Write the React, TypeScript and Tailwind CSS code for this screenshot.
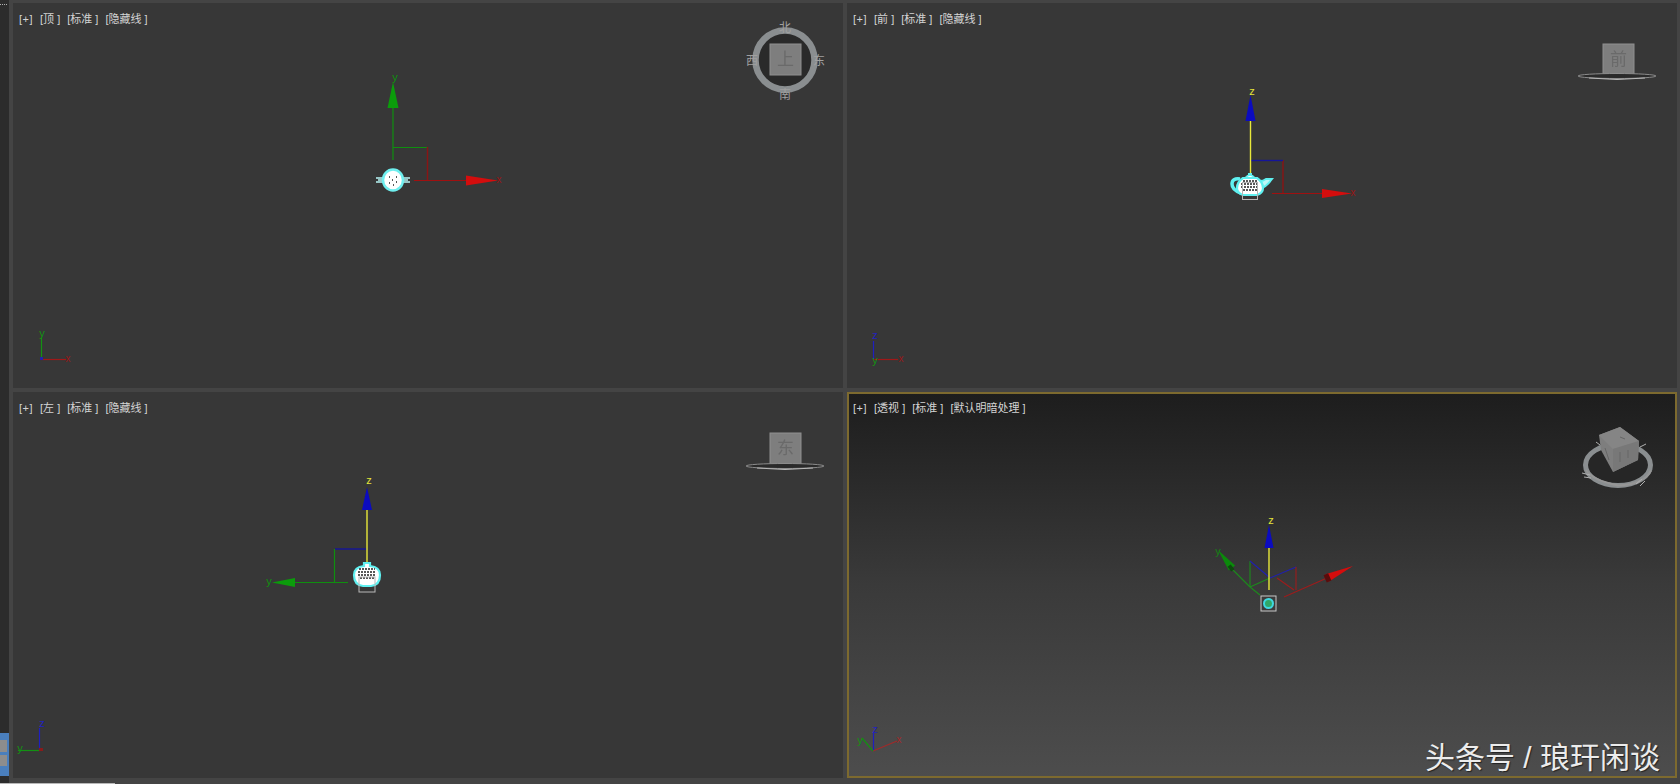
const cjk = "font-['Liberation_Sans','Noto_Sans_CJK_SC',sans-serif]";

function Label({ items }: { items: string[] }) {
  return (
    <div className={`absolute left-[6px] top-[10px] z-10 flex gap-[7px] text-[11px] leading-[13px] text-[#d4d4d4] ${cjk}`}>
      <span className="tracking-[0.5px]">[+]</span>
      {items.map((t) => (
        <span key={t}>{t}</span>
      ))}
    </div>
  );
}

// gizmo arrow: triangle with tip and base centre
function Arrow({ tip, base, w, color }: { tip: [number, number]; base: [number, number]; w: number; color: string }) {
  const dx = base[0] - tip[0];
  const dy = base[1] - tip[1];
  const l = Math.hypot(dx, dy);
  const nx = (-dy / l) * w;
  const ny = (dx / l) * w;
  return <polygon points={`${tip[0]},${tip[1]} ${base[0] + nx},${base[1] + ny} ${base[0] - nx},${base[1] - ny}`} fill={color} />;
}

function Letter({ x, y, c, t, size = 11 }: { x: number; y: number; c: string; t: string; size?: number }) {
  return (
    <text x={x} y={y} fill={c} fontSize={size} fontFamily="Liberation Sans, sans-serif" textAnchor="middle">
      {t}
    </text>
  );
}

function Teapot({ x, y, mode }: { x: number; y: number; mode: "top" | "front" | "left" }) {
  if (mode === "top") {
    return (
      <g>
        <path d={`M${x - 17} ${y - 2}h8M${x - 17} ${y + 2}h8M${x + 9} ${y - 2}h8M${x + 9} ${y + 2}h8M${x - 15} ${y}h6M${x + 9} ${y}h6`} stroke="#b8f6f6" strokeWidth="1.4" />
        <ellipse cx={x} cy={y} rx="10" ry="10.500" fill="#fff" stroke="#6fefef" strokeWidth="2.500" />
        <path d={`M${x - 4} ${y - 3}h1M${x + 3} ${y - 3}h1M${x - 1} ${y}h1M${x + 3} ${y + 2}h1M${x - 4} ${y + 3}h1M${x} ${y + 5}h1`} stroke="#222" strokeWidth="1.400" />
      </g>
    );
  }
  if (mode === "front") {
    return (
      <g>
        {/* handle */}
        <path d={`M${x - 10} ${y - 7}q-8 -1 -8 5q0 6 9 9`} fill="none" stroke="#5ff0f0" strokeWidth="3.500" />
        {/* spout */}
        <path d={`M${x + 11} ${y + 2}q5 -1 11 -9h-6q-3 2 -6 2z`} fill="#bdf8f8" stroke="#5ff0f0" strokeWidth="2" />
        {/* lid */}
        <path d={`M${x - 5} ${y - 8}q5 -6 10 0`} fill="#fff" stroke="#5ff0f0" strokeWidth="1.500" />
        <path d={`M${x - 2} ${y - 12}h4`} stroke="#5ff0f0" strokeWidth="2" />
        {/* body */}
        <path d={`M${x - 7} ${y - 8}h14q6 4 6 10q0 5 -6 7h-14q-6 -2 -6 -7q0 -6 6 -10z`} fill="#fff" stroke="#5ff0f0" strokeWidth="2.200" />
        <path d={`M${x - 7} ${y - 5}h14M${x - 9} ${y - 2}h18M${x - 9} ${y + 1}h18M${x - 7} ${y + 4}h14`} stroke="#222" strokeWidth="1.400" strokeDasharray="2 1" />
        <rect x={x - 7.500} y={y - 3.500} width="15" height="17" fill="none" stroke="#b4b4b4" strokeWidth="1" />
      </g>
    );
  }
  return (
    <g>
      <path d={`M${x - 3} ${y - 11}h6v3q10 1 10 9q0 10 -9 11h-8q-9 -1 -9 -11q0 -8 10 -9z`} fill="#fff" stroke="#5ff0f0" strokeWidth="2.200" />
      <path d={`M${x - 8} ${y - 5}h16M${x - 9} ${y - 2}h18M${x - 9} ${y + 1}h18M${x - 7} ${y + 4}h14`} stroke="#222" strokeWidth="1.400" strokeDasharray="2 1" />
      <rect x={x - 8} y={y + 3} width="16" height="15" fill="none" stroke="#b9b9b9" strokeWidth="1" />
    </g>
  );
}

function CubeFace({ x, y, t }: { x: number; y: number; t: string }) {
  return (
    <g className="blur-[0.6px]">
      <rect x={x} y={y} width="31" height="31" fill="#7e7e7e" stroke="#8f8f8f" strokeWidth="1" />
      <text x={x + 15.500} y={y + 21} fontSize="17" fill="#6a6a6a" textAnchor="middle" fontFamily="Noto Sans CJK SC, sans-serif">
        {t}
      </text>
    </g>
  );
}

function FlatRing({ cx, cy }: { cx: number; cy: number }) {
  return (
    <g className="blur-[0.5px]">
      <ellipse cx={cx} cy={cy} rx="39" ry="2.500" fill="#2a2a2a" stroke="#8c8c8c" strokeWidth="1" />
      <path d={`M${cx - 28} ${cy + 2}q28 3 56 0`} stroke="#b8b8b8" strokeWidth="1" fill="none" />
    </g>
  );
}

function TopView() {
  return (
    <svg className="absolute inset-0 h-full w-full" viewBox="13 3 830 385">
      <path d="M393 108V160" stroke="#0f8f0f" strokeWidth="1.200" />
      <path d="M393 147.500H427" stroke="#0f8f0f" strokeWidth="1" fill="none" />
      <path d="M427.500 147V180" stroke="#8a1414" strokeWidth="1.400" />
      <path d="M414 180.500H470" stroke="#a01010" strokeWidth="1.200" />
      <Arrow tip={[393, 82]} base={[393, 108]} w={5.500} color="#0b9c0b" />
      <Arrow tip={[498, 180.500]} base={[466, 180.500]} w={5} color="#d40d0d" />
      <Letter x={395} y={81} c="#0f8f0f" t="y" />
      <Letter x={499} y={183} c="#9a1515" t="x" size={10} />
      <Teapot x={393} y={180} mode="top" />
      {/* corner axis */}
      <path d="M41.500 359V337" stroke="#139113" strokeWidth="1.200" />
      <path d="M41 359.500H66" stroke="#a01818" strokeWidth="1.200" />
      <rect x="40" y="357" width="3" height="3" fill="#2222aa" />
      <Letter x={42} y={337} c="#139113" t="y" />
      <Letter x={68} y={362} c="#9a1818" t="x" size={10} />
      {/* view cube */}
      <circle className="blur-[0.6px]" cx="785" cy="60" r="29.500" fill="#2a2a2a" stroke="#8a8e90" strokeWidth="6.500" />
      <CubeFace x={770} y={44} t="上" />
      {[
        ["北", 785, 32],
        ["南", 785, 99],
        ["西", 752, 65],
        ["东", 819, 65],
      ].map(([t, x, y]) => (
        <text key={t as string} x={x as number} y={y as number} fontSize="12" fill="#a0a0a0" textAnchor="middle" fontFamily="Noto Sans CJK SC, sans-serif">
          {t}
        </text>
      ))}
    </svg>
  );
}

function FrontView() {
  return (
    <svg className="absolute inset-0 h-full w-full" viewBox="847 3 830 385">
      <path d="M1283 160V193" stroke="#8a1414" strokeWidth="1.400" />
      <path d="M1251 160.500H1283" stroke="#15159a" strokeWidth="1.400" />
      <path d="M1272 193.500H1326" stroke="#a01010" strokeWidth="1.200" />
      <path d="M1250.500 121V174" stroke="#e8e83a" strokeWidth="1.400" />
      <Arrow tip={[1250.500, 95]} base={[1250.500, 121]} w={5} color="#0b0bc0" />
      <Arrow tip={[1352, 193.500]} base={[1322, 193.500]} w={4.500} color="#d40d0d" />
      <Letter x={1252} y={95} c="#e4e43a" t="z" />
      <Letter x={1353} y={196} c="#9a1515" t="x" size={10} />
      <Teapot x={1250} y={186} mode="front" />
      {/* corner axis */}
      <path d="M873.500 360V341" stroke="#1f1fc0" strokeWidth="1.200" />
      <path d="M873 359.500H898" stroke="#a01818" strokeWidth="1.200" />
      <Letter x={875} y={339} c="#2222c0" t="z" />
      <Letter x={875} y={364} c="#139113" t="y" />
      <Letter x={901} y={362} c="#9a1818" t="x" size={10} />
      <CubeFace x={1603} y={44} t="前" />
      <FlatRing cx={1617} cy={76} />
    </svg>
  );
}

function LeftView() {
  return (
    <svg className="absolute inset-0 h-full w-full" viewBox="13 392 830 386">
      <path d="M334.500 549V582" stroke="#0f8f0f" strokeWidth="1.200" />
      <path d="M335 549H367" stroke="#15159a" strokeWidth="1.400" />
      <path d="M295 582.500H348" stroke="#0f8f0f" strokeWidth="1.200" />
      <path d="M367 510V562" stroke="#e8e83a" strokeWidth="1.400" />
      <Arrow tip={[367, 487]} base={[367, 510]} w={5} color="#0b0bc0" />
      <Arrow tip={[272, 582.500]} base={[295, 582.500]} w={4.500} color="#0b9c0b" />
      <Letter x={369} y={484} c="#e4e43a" t="z" />
      <Letter x={269} y={585} c="#0f8f0f" t="y" />
      <Teapot x={367} y={574} mode="left" />
      {/* corner axis */}
      <path d="M39.500 751V728" stroke="#1f1fc0" strokeWidth="1.200" />
      <path d="M18 750.500H39" stroke="#139113" strokeWidth="1.200" />
      <rect x="39" y="748" width="4" height="3" fill="#8a1a1a" />
      <Letter x={42} y={727} c="#2222c0" t="z" />
      <Letter x={20} y={752} c="#139113" t="y" />
      <CubeFace x={770} y={433} t="东" />
      <FlatRing cx={785} cy={466} />
    </svg>
  );
}

function PerspView() {
  return (
    <svg className="absolute inset-0 h-full w-full" viewBox="847 392 830 386">
      <path d="M1250 587L1270 578M1250 561V587M1250 587L1260 595" stroke="#1c8a1c" strokeWidth="1.100" fill="none" />
      <path d="M1230 567L1250 587" stroke="#1c8a1c" strokeWidth="1.100" />
      <path d="M1250 561L1269 577M1270 578L1296 567" stroke="#2020b0" strokeWidth="1.100" fill="none" />
      <path d="M1296 567V590M1277 578L1294 590" stroke="#9c1c1c" strokeWidth="1.100" fill="none" />
      <path d="M1284 597L1327 578" stroke="#9c1c1c" strokeWidth="1.200" />
      <path d="M1269 548V590" stroke="#e8e83a" strokeWidth="1.400" />
      <Arrow tip={[1269, 525]} base={[1269, 548]} w={4.500} color="#0b0bc0" />
      <Arrow tip={[1218, 550]} base={[1232, 568]} w={4} color="#0b8a0b" />
      <Arrow tip={[1353, 566]} base={[1327, 578]} w={4} color="#d40d0d" />
      <rect x="1325" y="574" width="5" height="8" fill="#5a0c0c" transform="rotate(-24 1327 578)" />
      <rect x="1229" y="565" width="4" height="6" fill="#0c4a0c" transform="rotate(-38 1231 568)" />
      <Letter x={1271} y={524} c="#e4e43a" t="z" />
      <Letter x={1218} y={555} c="#167f16" t="y" />
      <rect x="1261" y="596" width="15" height="15" fill="none" stroke="#c8c8c8" strokeWidth="1" />
      <circle cx="1268.500" cy="603.500" r="4.500" fill="#2fa868" stroke="#3fd8e0" strokeWidth="2" />
      {/* corner axis */}
      <path d="M873.500 751V733" stroke="#1f1fc0" strokeWidth="1.200" />
      <path d="M873 751L897 741" stroke="#a02a2a" strokeWidth="1.200" />
      <path d="M873 751L862 738" stroke="#139113" strokeWidth="1.200" />
      <Letter x={875} y={733} c="#2222c0" t="z" />
      <Letter x={860} y={744} c="#139113" t="y" />
      <Letter x={899} y={743} c="#a02a2a" t="x" size={10} />
      {/* view cube */}
      <g className="blur-[0.6px]">
        <ellipse cx="1618" cy="465" rx="32.500" ry="20.500" fill="#262626" stroke="#8a8e90" strokeWidth="5" />
        <path d="M1586 470q6 10 32 15.500q26 -1 33 -15" fill="none" stroke="#969696" strokeWidth="2" />
        <path d="M1582 473l8 2M1584 477l7 1M1636 484l6 -5M1640 486l5 -5M1600 445l-4 -3M1640 447l6 -3" stroke="#b0b0b0" strokeWidth="1" />
        <polygon points="1620,427 1599,435 1601,450 1613,472 1638,460 1639,441" fill="#7e7e7e" />
        <polygon points="1620,427 1599,435 1613,449 1639,441" fill="#858585" />
        <polygon points="1613,449 1639,441 1638,460 1613,472" fill="#787878" />
        <path d="M1620 437l5 2M1620 452v10M1628 450v8M1605 448l4 12" stroke="#666666" strokeWidth="1" />
      </g>
    </svg>
  );
}

export default function App() {
  return (
    <div className="flex h-[784px] w-[1680px] flex-col overflow-hidden bg-[#444444]">
      <div className="flex h-[783px]">
        {/* left strip */}
        <div className="flex w-[9px] flex-col justify-between bg-[#2c2c2c] pb-[7px] pt-[4px]">
          <div className="h-[1px] w-[7px] border-t border-dotted border-[#b0b0b0]" />
          <div className="flex h-[43px] flex-col gap-[3px] bg-[#4a7fbd] pt-[7px]">
            <div className="h-[12px] w-[7px] bg-[#8d8d8d]" />
            <div className="h-[11px] w-[7px] bg-[#8d8d8d]" />
          </div>
        </div>
        <div className="ml-[4px] grid h-[775px] grid-cols-[830px_830px] grid-rows-[385px_386px] gap-[4px] pt-[3px]">
          <div className="relative bg-[#373737]">
            <Label items={["[顶 ]", "[标准 ]", "[隐藏线 ]"]} />
            <TopView />
          </div>
          <div className="relative bg-[#373737]">
            <Label items={["[前 ]", "[标准 ]", "[隐藏线 ]"]} />
            <FrontView />
          </div>
          <div className="relative bg-[#373737]">
            <Label items={["[左 ]", "[标准 ]", "[隐藏线 ]"]} />
            <LeftView />
          </div>
          <div className="relative bg-gradient-to-b from-[#1d1d1d] via-[#3a3a3a] to-[#4d4d4d]">
            <Label items={["[透视 ]", "[标准 ]", "[默认明暗处理 ]"]} />
            <PerspView />
            <div className="pointer-events-none absolute inset-0 border-2 border-[#7d6a2f]" />
            <div className={`absolute bottom-[1px] right-[17px] text-[30px] leading-[38px] text-[#ececec] [text-shadow:1px_1px_1px_#222] ${cjk}`}>
              头条号 / 琅玕闲谈
            </div>
          </div>
        </div>
      </div>
      <div className="h-[1px] w-[115px] bg-[#b8b8b8]" />
    </div>
  );
}
